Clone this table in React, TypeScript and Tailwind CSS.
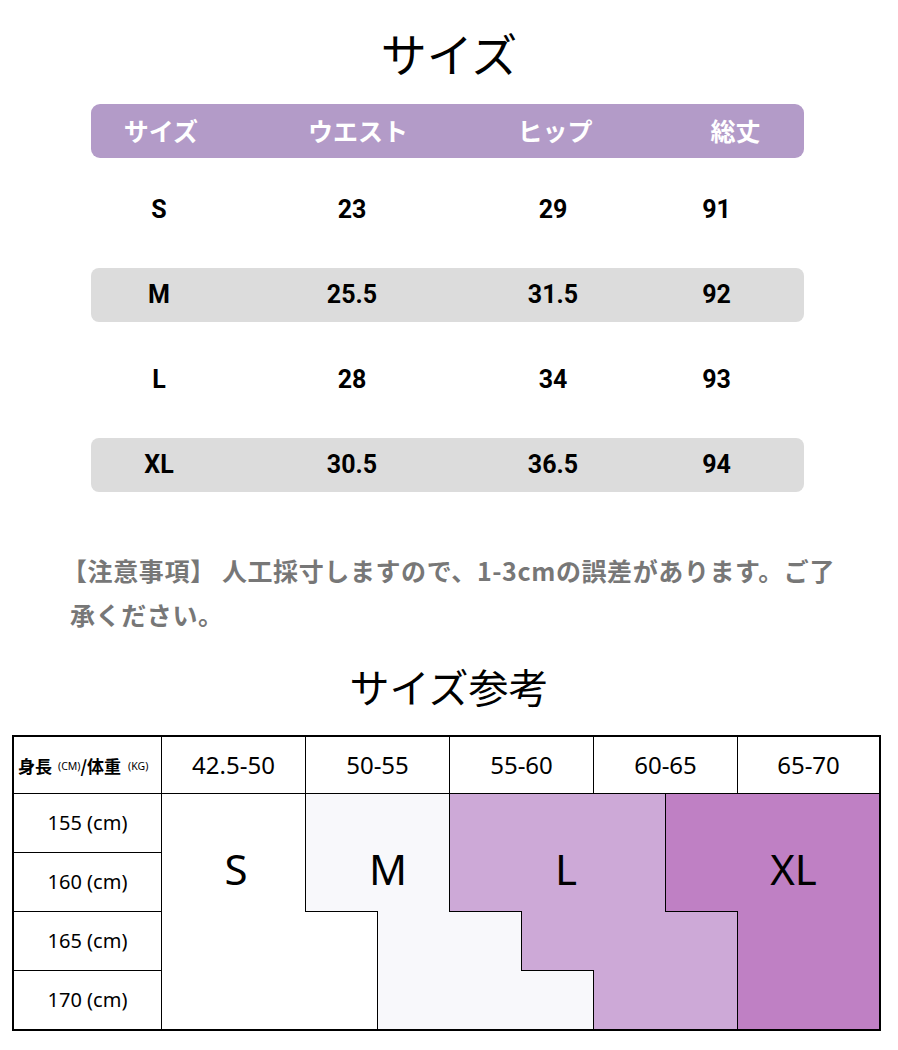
import React from 'react';

const jp = "font-['Noto_Sans_CJK_JP',sans-serif]";
const latin = "font-['Noto_Sans','Noto_Sans_CJK_JP',sans-serif]";

const sizeRows = [
  { size: 'S', waist: '23', hip: '29', length: '91', shaded: false },
  { size: 'M', waist: '25.5', hip: '31.5', length: '92', shaded: true },
  { size: 'L', waist: '28', hip: '34', length: '93', shaded: false },
  { size: 'XL', waist: '30.5', hip: '36.5', length: '94', shaded: true },
];

const weights = ['42.5-50', '50-55', '55-60', '60-65', '65-70'];
const heights = ['155', '160', '165', '170'];

// which size each half column belongs to, per body row
const regionMap = ['SSMMLLLXXX', 'SSMMLLLXXX', 'SSSMMLLLXX', 'SSSMMMLLXX'];

const fills: Record<string, string> = {
  S: 'bg-white',
  M: 'bg-[#f8f8fb]',
  L: 'bg-[#cda9d7]',
  X: 'bg-[#bf80c4]',
};

const colStart = [
  'col-start-2',
  'col-start-3',
  'col-start-4',
  'col-start-5',
  'col-start-6',
  'col-start-7',
  'col-start-8',
  'col-start-9',
  'col-start-10',
  'col-start-11',
];
const rowStart = ['row-start-2', 'row-start-3', 'row-start-4', 'row-start-5'];
const headerCol = ['col-start-2 col-span-2', 'col-start-4 col-span-2', 'col-start-6 col-span-2', 'col-start-8 col-span-2', 'col-start-10 col-span-2'];

const SizeTable: React.FC = () => (
  <div className="ml-[91px] w-[713px]">
    <div className={`grid h-[54px] grid-cols-[140px_254px_140px_179px] items-center rounded-[9px] bg-[#b39bc8] text-[25px] font-bold text-white ${jp}`}>
      <div className="text-center">サイズ</div>
      <div className="text-center">ウエスト</div>
      <div className="text-center">ヒップ</div>
      <div className="pl-[42px] text-center">総丈</div>
    </div>
    <div className="mt-[25px] flex flex-col gap-[31px]">
      {sizeRows.map((r) => (
        <div
          key={r.size}
          className={`grid h-[54px] grid-cols-[136px_250px_152px_175px] items-center rounded-[8px] text-[25px] font-bold text-black font-['Roboto',sans-serif] ${
            r.shaded ? 'bg-[#dcdcdc]' : ''
          }`}
        >
          <div className="text-center">{r.size}</div>
          <div className="text-center">{r.waist}</div>
          <div className="text-center">{r.hip}</div>
          <div className="text-center">{r.length}</div>
        </div>
      ))}
    </div>
  </div>
);

const ReferenceTable: React.FC = () => (
  <div className="ml-[12px] w-[869px] border-2 border-black">
    <div className={`grid grid-cols-[148px_repeat(9,72px)_69px] grid-rows-[57px_59px_59px_59px_58px] text-black ${latin}`}>
      <div className="col-start-1 row-start-1 flex items-center whitespace-nowrap border-b border-r border-black pl-[4px] leading-none">
        <span className={`text-[17px] font-bold ${jp}`}>身長</span>
        <span className="ml-[6px] mt-[3px] text-[10.5px]">(CM)</span>
        <span className={`text-[17px] font-bold ${jp}`}>/体重</span>
        <span className="ml-[7px] mt-[3px] text-[10.5px]">(KG)</span>
      </div>
      {weights.map((w, i) => (
        <div
          key={w}
          className={`${headerCol[i]} row-start-1 flex items-center justify-center border-b border-black text-[24px] ${
            i < 4 ? 'border-r' : ''
          }`}
        >
          {w}
        </div>
      ))}
      {heights.map((h, i) => (
        <div
          key={h}
          className={`col-start-1 ${rowStart[i]} flex items-center justify-center border-r border-black text-[20px] ${
            i < 3 ? 'border-b' : ''
          }`}
        >
          {h} (cm)
        </div>
      ))}
      {regionMap.map((row, r) =>
        row.split('').map((reg, c) => {
          const right = c < 9 && row[c + 1] !== reg;
          const below = r < 3 && regionMap[r + 1][c] !== reg;
          return (
            <div
              key={`${r}-${c}`}
              className={`${colStart[c]} ${rowStart[r]} border-black ${fills[reg]} ${right ? 'border-r' : ''} ${
                below ? 'border-b' : ''
              }`}
            />
          );
        })
      )}
      <div className="z-10 col-start-2 col-span-2 row-start-2 row-span-2 flex items-center justify-center pl-[4px] pt-[30px] text-[42px]">S</div>
      <div className="z-10 col-start-4 col-span-2 row-start-2 row-span-2 flex items-center justify-center pl-[20px] pt-[30px] text-[42px]">M</div>
      <div className="z-10 col-start-6 col-span-3 row-start-2 row-span-2 flex items-center justify-center pl-[16px] pt-[30px] text-[42px]">L</div>
      <div className="z-10 col-start-9 col-span-3 row-start-2 row-span-2 flex items-center justify-center pl-[42px] pt-[30px] text-[42px]">XL</div>
    </div>
  </div>
);

const App: React.FC = () => {
  return (
    <div className="min-h-[1050px] w-[898px] bg-white pt-[29px]">
      <h1 className={`h-[46px] text-center text-[46px] leading-none text-black ${jp}`}>サイズ</h1>
      <div className="mt-[29px]">
        <SizeTable />
      </div>
      <p className={`ml-[70px] mt-[56px] text-[25px] font-bold leading-[44px] tracking-[0.6px] text-[#777777] ${jp}`}>
        <span className="-ml-[8px] block whitespace-nowrap">【注意事項】 人工採寸しますので、1-3cmの誤差があります。ご了</span>
        承ください。
      </p>
      <h2 className={`mt-[30px] h-[40px] text-center text-[40px] leading-none text-black ${jp}`}>サイズ参考</h2>
      <div className="mt-[29px]">
        <ReferenceTable />
      </div>
    </div>
  );
};

export default App;
